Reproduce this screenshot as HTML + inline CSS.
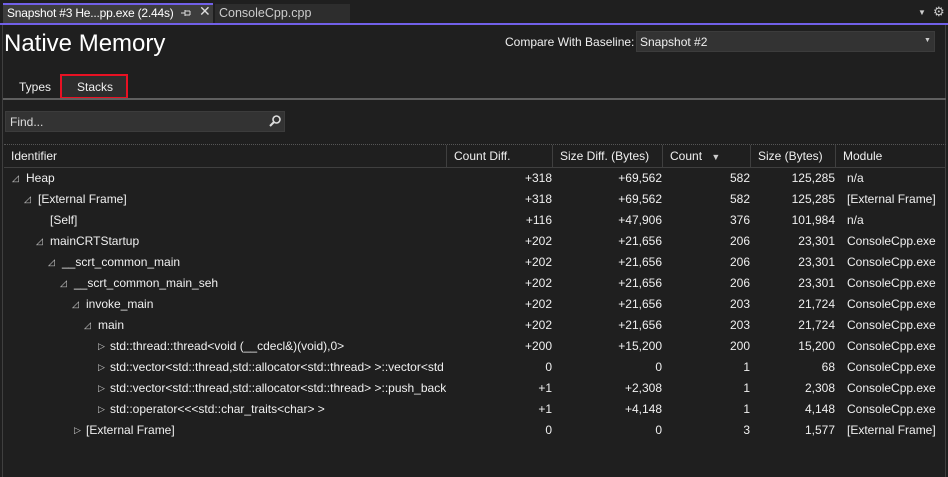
<!DOCTYPE html>
<html><head><meta charset="utf-8"><style>
*{margin:0;padding:0;box-sizing:border-box}
body{width:948px;height:477px;background:#1f1f1f;font-family:"Segoe UI","Liberation Sans",sans-serif;font-size:12px;color:#f0f0f0;position:relative;overflow:hidden}
.a{position:absolute;white-space:nowrap}
.r{position:absolute;height:21px;line-height:21px;left:0;width:948px}
.r span{position:absolute;white-space:nowrap}
.n{text-align:right}
.tri{font-size:9px;color:#ccc}
</style></head><body>
<div class="a" style="left:3px;top:3px;width:210px;height:20px;background:#3d3d3d;border-top:2px solid #7160e8"></div>
<div class="a" style="left:7px;top:5px;font-size:12px;line-height:16px;color:#fff;letter-spacing:-0.2px">Snapshot #3 He...pp.exe (2.44s)</div>
<svg class="a" style="left:180px;top:8px" width="12" height="10" viewBox="0 0 12 10"><path d="M1 5H5M5 2V8M5 3H10M5 7H10M10 3V7" stroke="#ddd" stroke-width="1" fill="none"/></svg>
<div class="a" style="left:199px;top:3px;font-size:14px;color:#ddd">✕</div>
<div class="a" style="left:215px;top:4px;width:135px;height:19px;background:#2d2d2d"></div>
<div class="a" style="left:219px;top:5px;font-size:12.5px;line-height:16px;color:#ccc">ConsoleCpp.cpp</div>
<div class="a" style="left:918px;top:8px;font-size:8px;color:#ccc">▼</div>
<div class="a" style="left:933px;top:4px;font-size:13px;color:#ccc">⚙</div>
<div class="a" style="left:0;top:23px;width:948px;height:2px;background:#7160e8"></div>
<div class="a" style="left:2px;top:25px;width:1px;height:452px;background:#3f3f3f"></div>
<div class="a" style="left:945px;top:25px;width:1px;height:452px;background:#3f3f3f"></div>
<div class="a" style="left:4px;top:27px;font-size:24px;line-height:34px;color:#fff">Native Memory</div>
<div class="a" style="left:505px;top:34px;font-size:12px;line-height:16px">Compare With Baseline:</div>
<div class="a" style="left:636px;top:31px;width:299px;height:21px;background:#333;border:1px solid #3c3c3c"></div>
<div class="a" style="left:640px;top:34px;line-height:16px">Snapshot #2</div>
<div class="a" style="left:924px;top:37px;font-size:7px;color:#ccc">▼</div>
<div class="a" style="left:19px;top:79px;line-height:16px">Types</div>
<div class="a" style="left:60px;top:74px;width:68px;height:25px;background:#2d2d2d;border:2px solid #e81123"></div>
<div class="a" style="left:77px;top:79px;line-height:16px">Stacks</div>
<div class="a" style="left:3px;top:98px;width:943px;height:2px;background:#5f5f5f"></div>
<div class="a" style="left:5px;top:111px;width:280px;height:21px;background:#333;border:1px solid #3c3c3c"></div>
<div class="a" style="left:10px;top:114px;line-height:16px;color:#ddd">Find...</div>
<svg class="a" style="left:268px;top:114px" width="14" height="14" viewBox="0 0 14 14"><circle cx="8.5" cy="5.5" r="3.5" fill="none" stroke="#ddd" stroke-width="1.6"/><path d="M6 8 L2 12" stroke="#ddd" stroke-width="2"/></svg>
<div class="a" style="left:4px;top:144px;width:942px;border-top:1px dotted #555"></div>
<div class="a" style="left:4px;top:167px;width:942px;height:1px;background:#3f3f3f"></div>
<div class="a" style="left:446px;top:145px;width:1px;height:22px;background:#3f3f3f"></div>
<div class="a" style="left:552px;top:145px;width:1px;height:22px;background:#3f3f3f"></div>
<div class="a" style="left:662px;top:145px;width:1px;height:22px;background:#3f3f3f"></div>
<div class="a" style="left:750px;top:145px;width:1px;height:22px;background:#3f3f3f"></div>
<div class="a" style="left:835px;top:145px;width:1px;height:22px;background:#3f3f3f"></div>
<div class="r" style="top:145px;height:22px;line-height:22px">
<span style="left:11px">Identifier</span><span style="left:454px">Count Diff.</span><span style="left:560px">Size Diff. (Bytes)</span><span style="left:670px">Count <span class="tri" style="position:static;margin-left:6px">▼</span></span><span style="left:758px">Size (Bytes)</span><span style="left:843px">Module</span></div>

<div class="r" style="top:168px"><span class="tri" style="left:12px">◿</span><span style="left:26px">Heap</span><span class="n" style="right:396px">+318</span><span class="n" style="right:286px">+69,562</span><span class="n" style="right:198px">582</span><span class="n" style="right:113px">125,285</span><span style="left:847px">n/a</span></div>
<div class="r" style="top:189px"><span class="tri" style="left:24px">◿</span><span style="left:38px">[External Frame]</span><span class="n" style="right:396px">+318</span><span class="n" style="right:286px">+69,562</span><span class="n" style="right:198px">582</span><span class="n" style="right:113px">125,285</span><span style="left:847px">[External Frame]</span></div>
<div class="r" style="top:210px"><span style="left:50px">[Self]</span><span class="n" style="right:396px">+116</span><span class="n" style="right:286px">+47,906</span><span class="n" style="right:198px">376</span><span class="n" style="right:113px">101,984</span><span style="left:847px">n/a</span></div>
<div class="r" style="top:231px"><span class="tri" style="left:36px">◿</span><span style="left:50px">mainCRTStartup</span><span class="n" style="right:396px">+202</span><span class="n" style="right:286px">+21,656</span><span class="n" style="right:198px">206</span><span class="n" style="right:113px">23,301</span><span style="left:847px">ConsoleCpp.exe</span></div>
<div class="r" style="top:252px"><span class="tri" style="left:48px">◿</span><span style="left:62px">__scrt_common_main</span><span class="n" style="right:396px">+202</span><span class="n" style="right:286px">+21,656</span><span class="n" style="right:198px">206</span><span class="n" style="right:113px">23,301</span><span style="left:847px">ConsoleCpp.exe</span></div>
<div class="r" style="top:273px"><span class="tri" style="left:60px">◿</span><span style="left:74px">__scrt_common_main_seh</span><span class="n" style="right:396px">+202</span><span class="n" style="right:286px">+21,656</span><span class="n" style="right:198px">206</span><span class="n" style="right:113px">23,301</span><span style="left:847px">ConsoleCpp.exe</span></div>
<div class="r" style="top:294px"><span class="tri" style="left:72px">◿</span><span style="left:86px">invoke_main</span><span class="n" style="right:396px">+202</span><span class="n" style="right:286px">+21,656</span><span class="n" style="right:198px">203</span><span class="n" style="right:113px">21,724</span><span style="left:847px">ConsoleCpp.exe</span></div>
<div class="r" style="top:315px"><span class="tri" style="left:84px">◿</span><span style="left:98px">main</span><span class="n" style="right:396px">+202</span><span class="n" style="right:286px">+21,656</span><span class="n" style="right:198px">203</span><span class="n" style="right:113px">21,724</span><span style="left:847px">ConsoleCpp.exe</span></div>
<div class="r" style="top:336px"><span class="tri" style="left:98px">▷</span><span style="left:110px">std::thread::thread&lt;void (__cdecl&amp;)(void),0&gt;</span><span class="n" style="right:396px">+200</span><span class="n" style="right:286px">+15,200</span><span class="n" style="right:198px">200</span><span class="n" style="right:113px">15,200</span><span style="left:847px">ConsoleCpp.exe</span></div>
<div class="r" style="top:357px"><span class="tri" style="left:98px">▷</span><span style="left:110px;width:336px;overflow:hidden">std::vector&lt;std::thread,std::allocator&lt;std::thread&gt; &gt;::vector&lt;std</span><span class="n" style="right:396px">0</span><span class="n" style="right:286px">0</span><span class="n" style="right:198px">1</span><span class="n" style="right:113px">68</span><span style="left:847px">ConsoleCpp.exe</span></div>
<div class="r" style="top:378px"><span class="tri" style="left:98px">▷</span><span style="left:110px;width:336px;overflow:hidden">std::vector&lt;std::thread,std::allocator&lt;std::thread&gt; &gt;::push_back</span><span class="n" style="right:396px">+1</span><span class="n" style="right:286px">+2,308</span><span class="n" style="right:198px">1</span><span class="n" style="right:113px">2,308</span><span style="left:847px">ConsoleCpp.exe</span></div>
<div class="r" style="top:399px"><span class="tri" style="left:98px">▷</span><span style="left:110px">std::operator&lt;&lt;&lt;std::char_traits&lt;char&gt; &gt;</span><span class="n" style="right:396px">+1</span><span class="n" style="right:286px">+4,148</span><span class="n" style="right:198px">1</span><span class="n" style="right:113px">4,148</span><span style="left:847px">ConsoleCpp.exe</span></div>
<div class="r" style="top:420px"><span class="tri" style="left:74px">▷</span><span style="left:86px">[External Frame]</span><span class="n" style="right:396px">0</span><span class="n" style="right:286px">0</span><span class="n" style="right:198px">3</span><span class="n" style="right:113px">1,577</span><span style="left:847px">[External Frame]</span></div>
</body></html>
